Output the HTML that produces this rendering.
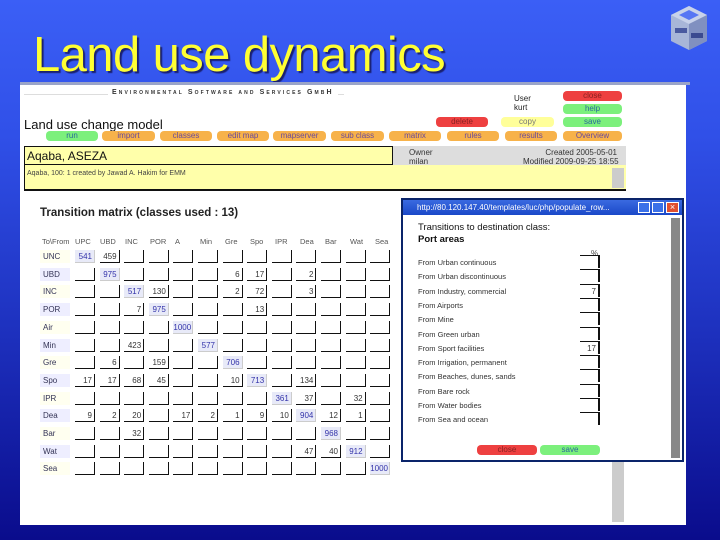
<!DOCTYPE html>
<html><head><meta charset="utf-8"><style>
*{margin:0;padding:0;box-sizing:border-box}
body{width:720px;height:540px;overflow:hidden;position:relative;font-family:"Liberation Sans",sans-serif;background:linear-gradient(180deg,#3b5ff6 0%,#3050e8 25%,#1e32c0 60%,#0a0c8c 100%)}
.a{position:absolute}
.t{font-size:8px;color:#444;white-space:nowrap}
.b{position:absolute;height:10px;border-radius:4px;font-size:8px;text-align:center;line-height:10px;color:#555}
.o{background:#f7b24a;color:#6a4a9a}
.g{background:#7cf07c;color:#2a6a9a}
.r{background:#ee4040;color:#822}
.y{background:#ffff9a;color:#777}
.c{position:absolute;width:20px;height:13px;border-right:1px solid #111;border-bottom:1px solid #111;font-size:8px;text-align:right;padding-right:2px;line-height:13px;color:#333}
.lb{position:absolute;font-size:8px;color:#335;width:30px;height:13px;line-height:13px;padding-left:3px}
</style></head><body>
<div class="a" style="left:33px;top:27px;font-size:49px;color:#ffff33;text-shadow:2px 2px 1px #1a2070;letter-spacing:-0.6px">Land use dynamics</div>
<svg class="a" style="left:665px;top:3px" width="48" height="50" viewBox="0 0 48 50">
<polygon points="6,12 24,3 42,12 42,38 24,47 6,38" fill="#a8b6d8"/>
<polygon points="6,12 24,21 42,12 24,3" fill="#c8d2ea"/>
<polygon points="24,21 24,47 42,38 42,12" fill="#8090c0"/>
<polygon points="14,12 24,7 34,12 24,17" fill="#3b5ff6" opacity=".8"/>
<rect x="10" y="25" width="12" height="5" fill="#4a5aa0"/><rect x="26" y="30" width="12" height="5" fill="#3a4a90"/>
</svg>
<div class="a" style="left:20px;top:82px;width:670px;height:3px;background:#9aa4c8"></div>
<div class="a" style="left:20px;top:85px;width:666px;height:440px;background:#fff"></div>
<div class="a" style="left:24px;top:94px;width:320px;height:1px;background:#ddd"></div>
<div class="a" style="left:108px;top:89px;font-size:7px;letter-spacing:2.1px;color:#333;font-weight:bold;font-variant:small-caps;background:#fff;padding:0 4px">Environmental Software and Services GmbH</div>
<div class="a t" style="left:514px;top:94px;color:#222">User<br>kurt</div>
<div class="b r" style="left:563px;top:91px;width:59px">close</div>
<div class="b g" style="left:563px;top:104px;width:59px">help</div>
<div class="b g" style="left:563px;top:117px;width:59px">save</div>
<div class="b r" style="left:436px;top:117px;width:52px">delete</div>
<div class="b y" style="left:501px;top:117px;width:53px">copy</div>
<div class="a" style="left:24px;top:117px;font-size:13px;color:#111">Land use change model</div>
<div class="b g" style="left:46px;top:131px;width:52px">run</div>
<div class="b o" style="left:102px;top:131px;width:53px">import</div>
<div class="b o" style="left:160px;top:131px;width:52px">classes</div>
<div class="b o" style="left:217px;top:131px;width:52px">edit map</div>
<div class="b o" style="left:273px;top:131px;width:53px">mapserver</div>
<div class="b o" style="left:331px;top:131px;width:53px">sub class</div>
<div class="b o" style="left:389px;top:131px;width:52px">matrix</div>
<div class="b o" style="left:447px;top:131px;width:52px">rules</div>
<div class="b o" style="left:505px;top:131px;width:52px">results</div>
<div class="b o" style="left:563px;top:131px;width:59px">Overview</div>
<div class="a" style="left:24px;top:146px;width:602px;height:45px;background:#ffffaa;border-bottom:2px solid #111;border-left:1px solid #111"></div>
<div class="a" style="left:392px;top:146px;width:234px;height:19px;background:#ddd"></div>
<div class="a" style="left:24px;top:146px;width:369px;height:19px;border:1px solid #111;border-left:none;font-size:12px;line-height:18px;padding-left:3px;color:#111">Aqaba, ASEZA</div>
<div class="a t" style="left:409px;top:148px;color:#333">Owner<br>milan</div>
<div class="a t" style="left:523px;top:148px;text-align:right;width:94px;color:#333">Created 2005-05-01<br>Modified 2009-09-25 18:55</div>
<div class="a t" style="left:27px;top:170px;font-size:7px">Aqaba, 100: 1 created by Jawad A. Hakim for EMM</div>
<div class="a" style="left:612px;top:168px;width:12px;height:20px;background:#ccc"></div>
<div class="a" style="left:40px;top:207px;font-size:11.5px;font-weight:bold;color:#222">Transition matrix (classes used : 13)</div>
<div id="m"></div>
<div class="a" style="left:612px;top:460px;width:12px;height:62px;background:#ccc"></div>
<div class="a" style="left:401px;top:198px;width:283px;height:264px;background:#0a246a;padding:2px"></div>
<div class="a" style="left:403px;top:200px;width:279px;height:15px;background:linear-gradient(#3a6ae0,#1a48c8);color:#fff;font-size:8px;line-height:15px;padding-left:14px">http://80.120.147.40/templates/luc/php/populate_row...</div>
<div class="a" style="left:638px;top:202px;width:12px;height:11px;background:#3a70e8;border:1px solid #fff"></div>
<div class="a" style="left:652px;top:202px;width:12px;height:11px;background:#3a70e8;border:1px solid #fff"></div>
<div class="a" style="left:666px;top:202px;width:13px;height:11px;background:#e05030;border:1px solid #fff;color:#fff;font-size:9px;line-height:9px;text-align:center">×</div>
<div class="a" style="left:403px;top:215px;width:279px;height:245px;background:#fff"></div>
<div class="a" style="left:671px;top:218px;width:9px;height:240px;background:#888"></div>
<div class="a" style="left:418px;top:222px;font-size:9.5px;color:#111;line-height:12px">Transitions to destination class:<br><b>Port areas</b></div>
<div class="a t" style="left:591px;top:249px">%</div>
<div id="p"></div>
<div class="b r" style="left:477px;top:445px;width:60px">close</div>
<div class="b g" style="left:540px;top:445px;width:60px">save</div>
<script>
var cols=["To\\From","UPC","UBD","INC","POR","A","Min","Gre","Spo","IPR","Dea","Bar","Wat","Sea"];
var rows=["UNC","UBD","INC","POR","Air","Min","Gre","Spo","IPR","Dea","Bar","Wat","Sea"];
var v=[["541","459"],["","975","","","","","6","17","","2"],["","","517","130","","","2","72","","3"],["","","7","975","","","","13"],["","","","","1000"],["","","423","","","577"],["","6","","159","","","706"],["17","17","68","45","","","10","713","","134"],["","","","","","","","","361","37","","32"],["9","2","20","","17","2","1","9","10","904","12","1"],["","","32","","","","","","","","968"],["","","","","","","","","","47","40","912"],["","","","","","","","","","","","","1000"]];
var h="";
for(var j=0;j<14;j++)h+='<div class="a t" style="left:'+(j==0?42:70+j*25-25+5)+'px;top:237px;font-size:7.5px;color:#555">'+cols[j]+'</div>';
for(var i=0;i<13;i++){var y=250+i*17.7;h+='<div class="lb" style="left:40px;top:'+y+'px;background:'+(i%2?'#eef':'#fffff0')+'">'+rows[i]+'</div>';
for(var j=0;j<13;j++){var x=75+j*24.6;var t=(v[i]&&v[i][j])||"";h+='<div class="c" style="left:'+x+'px;top:'+y+'px;'+(i==j?'background:#e8eaf8;border-color:#ccc;color:#33a':'')+'">'+t+'</div>';}}
document.getElementById("m").innerHTML=h;
var f=["Urban continuous","Urban discontinuous","Industry, commercial","Airports","Mine","Green urban","Sport facilities","Irrigation, permanent","Beaches, dunes, sands","Bare rock","Water bodies","Sea and ocean"];
var pv=["","","7","","","","17"];var p="";
for(var i=0;i<12;i++){var y=258+i*14.3;p+='<div class="a t" style="left:418px;top:'+y+'px;font-size:7.5px;color:#333">From  '+f[i]+'</div><div class="c" style="left:580px;top:'+(y-3)+'px;width:20px;height:13px;border-top:1px solid #111;border-right:2px solid #111;border-bottom:none">'+(pv[i]||"")+'</div>';}
document.getElementById("p").innerHTML=p;
</script>
</body></html>
